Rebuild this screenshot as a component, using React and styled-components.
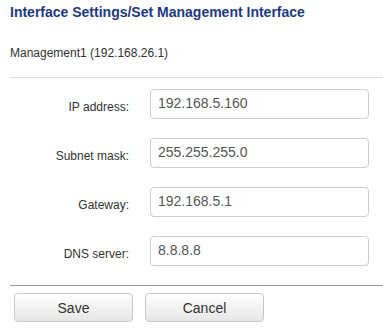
import React from "react";
import styled, { createGlobalStyle } from "styled-components";

const Global = createGlobalStyle`
  html, body { margin: 0; padding: 0; background: #fff; }
  body { font-family: "Liberation Sans", Arial, sans-serif; }
`;

const Page = styled.div`
  padding-left: 10px;
  width: 373px;
`;

const Header = styled.div`
  padding-top: 4px;
  border-bottom: 1px solid #dddddd;
  padding-bottom: 17px;
`;

const Title = styled.h1`
  margin: 0;
  font-size: 14px;
  line-height: 16px;
  font-weight: bold;
  color: #1d3983;
  white-space: nowrap;
`;

const Subtitle = styled.div`
  margin-top: 26px;
  font-size: 12px;
  line-height: 14px;
  color: #333;
`;

const Form = styled.div`
  display: grid;
  grid-template-columns: 119px 219px;
  column-gap: 21px;
  row-gap: 19px;
  padding-top: 11px;
  padding-bottom: 19px;
`;

const Label = styled.label`
  text-align: right;
  font-size: 12px;
  line-height: 14px;
  color: #333;
  padding-top: 11px;
`;

const Input = styled.input`
  box-sizing: border-box;
  width: 219px;
  height: 30px;
  margin: 0;
  border: 1px solid #cccccc;
  border-radius: 4px;
  padding: 0 7px 2px;
  font-family: "Liberation Sans", Arial, sans-serif;
  font-size: 14px;
  color: #555;
  outline: none;
`;

const Footer = styled.div`
  border-top: 1px solid #9a9a9a;
  padding: 7px 0 0 4px;
  display: flex;
  gap: 12px;
`;

const Button = styled.button`
  box-sizing: border-box;
  width: 119px;
  height: 29px;
  margin: 0;
  border: 1px solid #c8c8c8;
  border-radius: 4px;
  background: linear-gradient(#ffffff, #e6e6e6);
  font-family: "Liberation Sans", Arial, sans-serif;
  font-size: 14px;
  color: #333;
  cursor: pointer;
`;

const fields = [
  ["IP address:", "192.168.5.160"],
  ["Subnet mask:", "255.255.255.0"],
  ["Gateway:", "192.168.5.1"],
  ["DNS server:", "8.8.8.8"],
];

export default function App() {
  return (
    <>
      <Global />
      <Page>
        <Header>
          <Title>Interface Settings/Set Management Interface</Title>
          <Subtitle>Management1 (192.168.26.1)</Subtitle>
        </Header>
        <Form>
          {fields.map(([label, value]) => (
            <React.Fragment key={label}>
              <Label>{label}</Label>
              <Input defaultValue={value} />
            </React.Fragment>
          ))}
        </Form>
        <Footer>
          <Button>Save</Button>
          <Button>Cancel</Button>
        </Footer>
      </Page>
    </>
  );
}
